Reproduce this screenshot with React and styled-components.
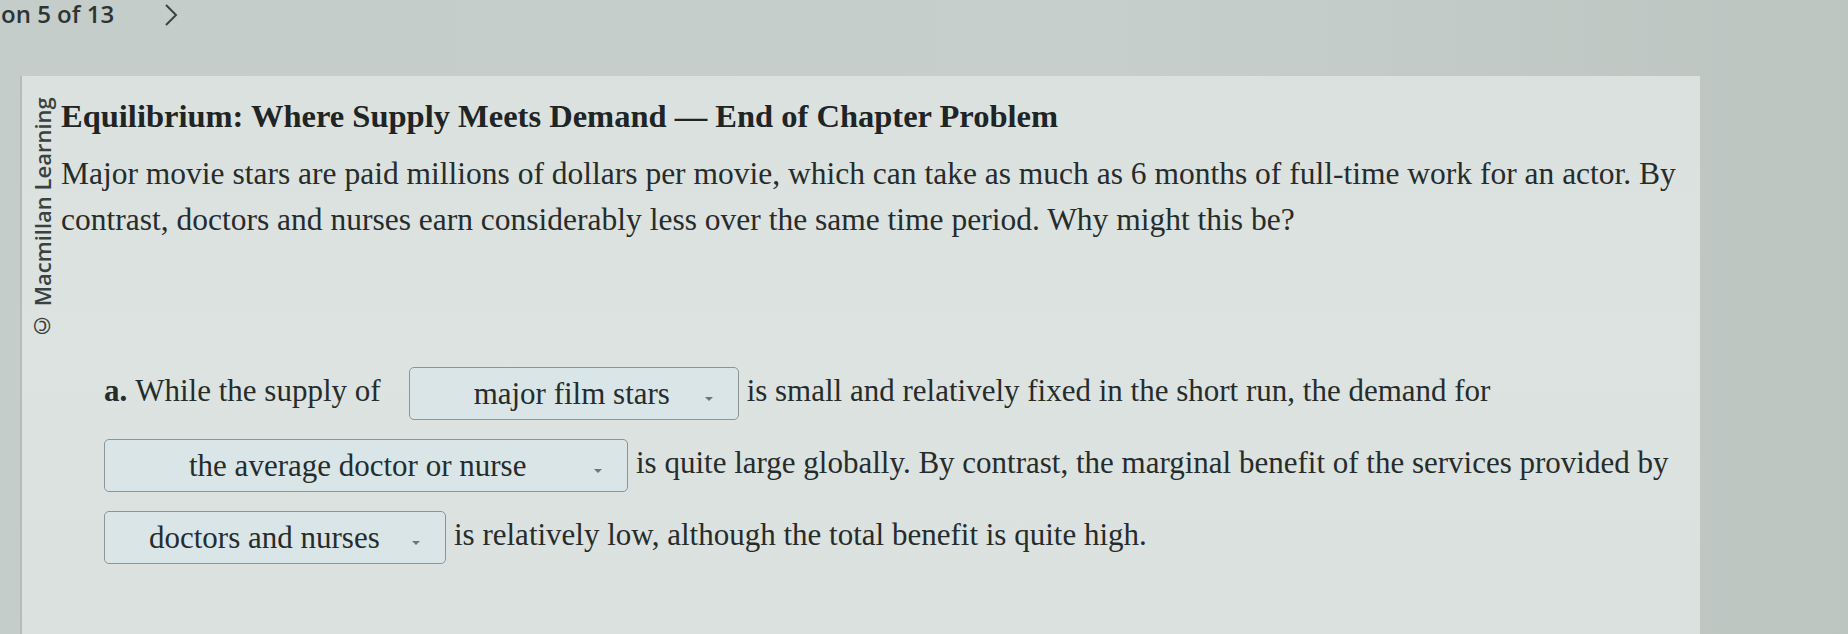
import React from "react";
import styled, { createGlobalStyle } from "styled-components";

const Global = createGlobalStyle`
  html, body {
    margin: 0;
    padding: 0;
    background: #c0c9c5;
  }
  body {
    width: 1848px;
    height: 634px;
    overflow: hidden;
  }
`;

const Page = styled.div`
  width: 1848px;
  height: 634px;
  display: flex;
  flex-direction: column;
  background: linear-gradient(90deg, #c4cdca 0%, #c6cfcc 60%, #bcc5c0 100%);
`;

const TopBar = styled.div`
  height: 76px;
  display: flex;
  align-items: flex-start;
  gap: 50px;
  padding-left: 1px;
  font-family: "Open Sans", "Liberation Sans", sans-serif;
  font-weight: 600;
  font-size: 24px;
  color: #2c3534;
`;

const Counter = styled.span`
  line-height: 28px;
`;

const Chevron = styled.svg`
  margin-top: 3px;
`;

const Panel = styled.div`
  flex: 1;
  margin-left: 22px;
  width: 1678px;
  display: flex;
  background: linear-gradient(180deg, #dbe1de 0%, #dde3e0 50%, #dae1de 100%);
  box-shadow: -2px 0 0 #b4bdb9;
`;

const Side = styled.div`
  width: 39px;
  display: flex;
  justify-content: center;
  padding-top: 22px;
`;

const Credit = styled.div`
  writing-mode: vertical-rl;
  transform: rotate(180deg);
  font-family: "Open Sans", "Liberation Sans", sans-serif;
  font-size: 22px;
  font-weight: 600;
  color: #384241;
  height: 244px;
  text-align: left;
  white-space: nowrap;
`;

const Content = styled.div`
  flex: 1;
  padding: 20px 2px 0 0;
  font-family: "Liberation Serif", "Times New Roman", serif;
  color: #262c2c;
`;

const Title = styled.h1`
  margin: 0;
  font-size: 32.5px;
  font-weight: 700;
  line-height: 40px;
  color: #1f2424;
  white-space: nowrap;
`;

const Lead = styled.p`
  margin: 15px 0 0;
  font-size: 31.5px;
  line-height: 46px;
`;

const Part = styled.p`
  margin: 112px 0 0 43px;
  font-size: 31px;
  line-height: 72px;
`;

const PartLabel = styled.b`
  margin-right: 8px;
`;

const Select = styled.span`
  display: inline-flex;
  align-items: center;
  box-sizing: border-box;
  width: ${(p) => p.$w}px;
  height: 53px;
  padding-left: ${(p) => p.$pl}px;
  padding-right: 24px;
  margin: 0 8px 0 ${(p) => p.$ml}px;
  vertical-align: middle;
  border: 1.5px solid #8d9593;
  border-radius: 5px;
  background: rgba(216, 229, 232, 0.9);
  line-height: 1;
`;

const SelectText = styled.span`
  flex: 1;
  white-space: nowrap;
`;

const Caret = styled.svg`
  flex: none;
  margin-top: 10px;
`;

function Dropdown({ w, pl, ml = 0, children }) {
  return (
    <Select $w={w} $pl={pl} $ml={ml}>
      <SelectText>{children}</SelectText>
      <Caret width="10" height="6" viewBox="0 0 10 6">
        <path d="M1 1 L5 5 L9 1 Z" fill="#6f7775" />
      </Caret>
    </Select>
  );
}

export default function App() {
  return (
    <>
      <Global />
      <Page>
        <TopBar>
          <Counter>on 5 of 13</Counter>
          <Chevron width="14" height="24" viewBox="0 0 14 24">
            <path d="M2 2 L12 12 L2 22" fill="none" stroke="#3a4342" strokeWidth="2" />
          </Chevron>
        </TopBar>
        <Panel>
          <Side>
            <Credit>© Macmillan Learning</Credit>
          </Side>
          <Content>
            <Title>Equilibrium: Where Supply Meets Demand — End of Chapter Problem</Title>
            <Lead>
              Major movie stars are paid millions of dollars per movie, which can take as much as 6 months of
              full-time work for an actor. By contrast, doctors and nurses earn considerably less over the same
              time period. Why might this be?
            </Lead>
            <Part>
              <PartLabel>a.</PartLabel>While the supply of
              <Dropdown w={330} pl={64} ml={28}>major film stars</Dropdown>
              is small and relatively fixed in the short run, the demand for{" "}
              <Dropdown w={524} pl={84}>the average doctor or nurse</Dropdown>
              is quite large globally. By contrast, the marginal benefit of the services provided by{" "}
              <Dropdown w={342} pl={44}>doctors and nurses</Dropdown>
              is relatively low, although the total benefit is quite high.
            </Part>
          </Content>
        </Panel>
      </Page>
    </>
  );
}
